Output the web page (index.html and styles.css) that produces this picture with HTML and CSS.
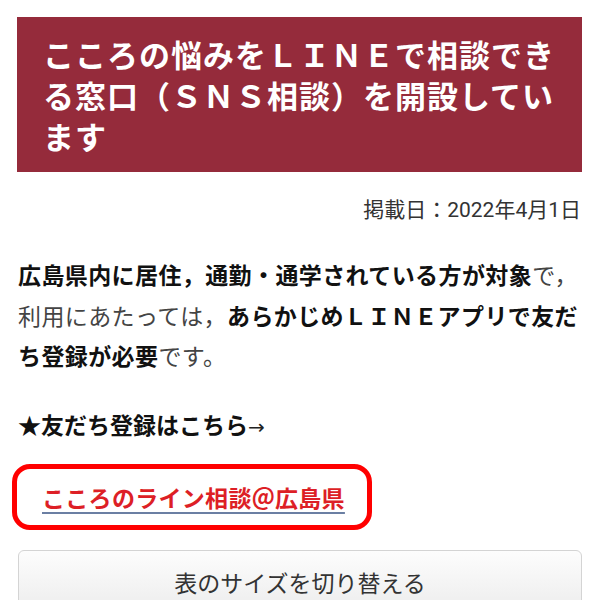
FILE: index.html
```html
<!DOCTYPE html>
<html lang="ja">
<head>
    <meta charset="UTF-8">
    <meta name="viewport" content="width=device-width, initial-scale=1.0">
    <title>こころの悩みをＬＩＮＥで相談できる窓口</title>
    <link rel="stylesheet" href="styles.css">
</head>
<body>
    <main class="page">
        <h1 class="page-title">こころの悩みをＬＩＮＥで相談できる窓口（ＳＮＳ相談）を開設しています</h1>
        <p class="date">掲載日：2022年4月1日</p>

        <p class="lead">
            <strong>広島県内に居住，通勤・通学されている方が対象</strong>で，<br>利用にあたっては，<strong>あらかじめＬＩＮＥアプリで友だち登録が必要</strong>です。
        </p>

        <p class="friend"><strong>★友だち登録はこちら</strong><span class="arrow">→</span></p>

        <div class="link-box">
            <a href="#" class="line-link">こころのライン相談＠広島県</a>
        </div>

        <button class="table-toggle">表のサイズを切り替える</button>
    </main>
</body>
</html>
```

FILE: styles.css
```css
/* styles.css */
body {
    margin: 0;
    padding: 0;
    font-family: "Noto Sans CJK JP", "Noto Sans", sans-serif;
    color: #222;
    background-color: #fff;
}

.page {
    padding: 17px 18px 0 17px;
}

.page-title {
    margin: 0;
    padding: 16px 20px 16px 26px;
    background-color: #952b3b;
    color: #fff;
    font-size: 31px;
    font-weight: bold;
    line-height: 41px;
    letter-spacing: 1px;
}

.date {
    margin: 18px 1px 0 0;
    text-align: right;
    font-size: 21px;
    line-height: 40px;
    color: #333;
    font-family: Roboto, "Noto Sans CJK JP", sans-serif;
}

.lead {
    margin: 24px 0 0 1px;
    font-size: 23px;
    line-height: 40.5px;
    letter-spacing: 0.4px;
    color: #444;
}

.lead strong,
.friend strong {
    color: #111;
}

.friend {
    margin: 28px 0 0 1px;
    font-size: 23px;
    line-height: 40px;
}

.friend .arrow {
    font-family: "DejaVu Sans", sans-serif;
    font-size: 20px;
    color: #222;
}

.link-box {
    margin: 17px 0 0 -5px;
    height: 56px;
    width: 325px;
    padding-left: 25px;
    border: 5px solid #f00;
    border-radius: 18px;
    display: flex;
    align-items: center;
}

.line-link {
    color: #dd1f26;
    font-size: 23px;
    font-weight: bold;
    letter-spacing: 0.3px;
    text-decoration: underline;
    text-decoration-color: #6b7fa3;
    text-decoration-thickness: 2px;
    text-underline-offset: 5px;
}

.table-toggle {
    display: block;
    width: calc(100% - 1px);
    margin: 20px 0 0 1px;
    height: 64px;
    border: 1px solid #d4d4d4;
    border-radius: 6px;
    background: linear-gradient(#fdfdfd, #ececec);
    font-family: "Noto Sans CJK JP", sans-serif;
    font-size: 23px;
    color: #333;
    padding: 0;
    text-align: center;
}
```
